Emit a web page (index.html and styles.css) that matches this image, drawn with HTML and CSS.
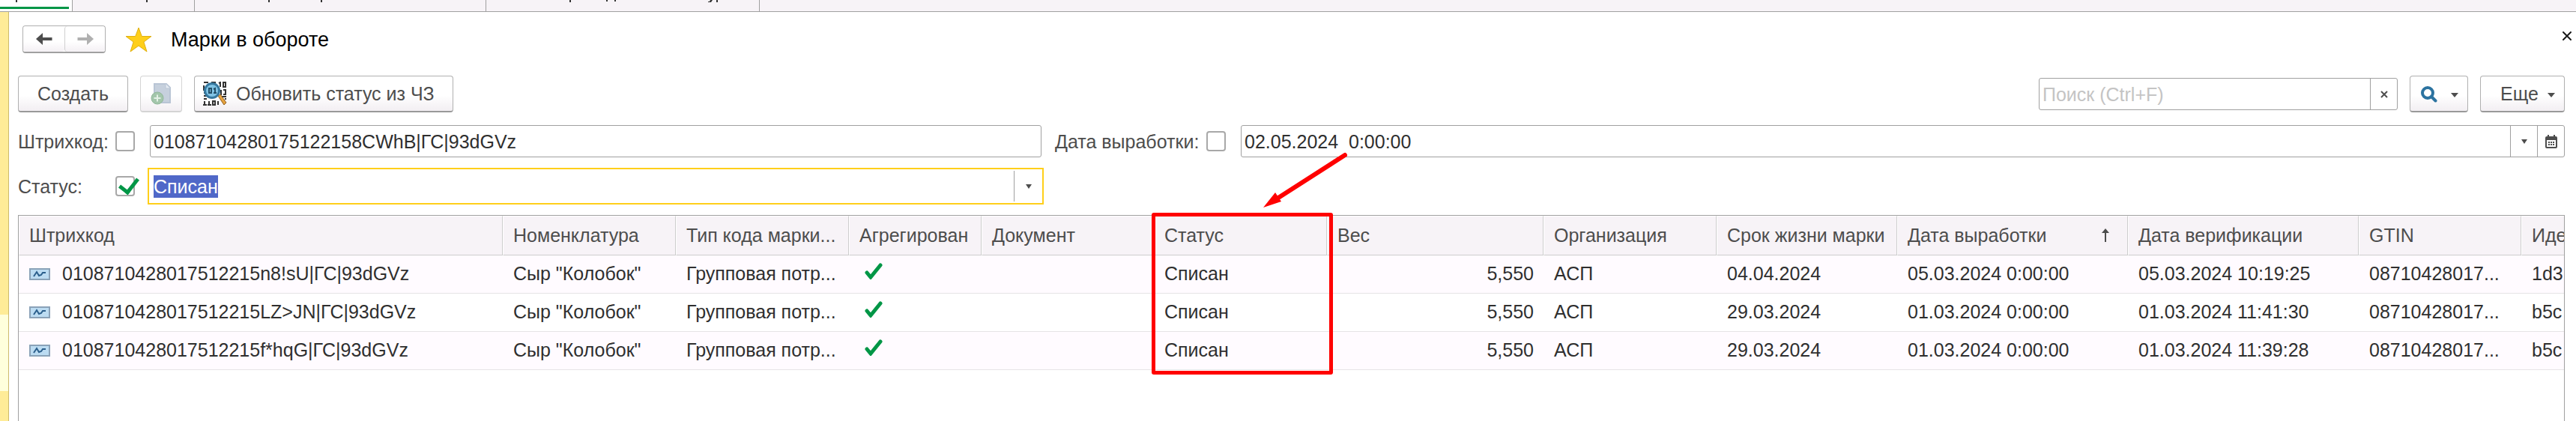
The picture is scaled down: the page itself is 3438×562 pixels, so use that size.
FILE: index.html
```html
<!DOCTYPE html>
<html lang="ru">
<head>
  <meta charset="UTF-8">
  <meta name="viewport" content="width=device-width, initial-scale=1.0">
  <title>Марки в обороте</title>
  <link rel="stylesheet" href="styles.css">
</head>
<body>
  <!-- Bottom edge of the window tabs -->
  <div class="tabs">
    <div class="tab tab-active"><svg width="96" height="4" viewBox="0 0 96 4"><path d="M21 0h2v3h-2z" fill="#333"/></svg></div>
    <div class="tab tab-second"><svg width="160" height="4" viewBox="0 0 160 4"><path d="M98 0h2v3h-2z" fill="#333"/></svg></div>
    <div class="tab tab-third"><svg width="380" height="4" viewBox="0 0 380 4"><path d="M98 0h2v3h-2zM168 0h2v3h-2z" fill="#333"/></svg></div>
    <div class="tab tab-fourth"><svg width="360" height="4" viewBox="0 0 360 4"><path d="M111 0h2v3h-2zM160 0h2v2h-2zM171 0h2v2h-2zM299 0h3l-2 3h-4V2h2zM307 0h2v3h-2z" fill="#333"/></svg></div>
  </div>

  <div class="workspace">
    <div class="sidebar"><div class="sidebar-current"></div></div>

    <main class="form">
      <header class="title-bar">
        <div class="nav">
          <button type="button" class="nav-button" aria-label="Назад">
            <svg width="22" height="16" viewBox="0 0 22 16"><path d="M0 8 9 0v6h12.500v4H9v6z" fill="#4d4d4d"/></svg>
          </button>
          <button type="button" class="nav-button" aria-label="Вперед">
            <svg width="22" height="16" viewBox="0 0 22 16"><path d="M22 8 13 0v6H.5v4H13v6z" fill="#b0b0b0"/></svg>
          </button>
        </div>
        <svg class="star" width="36" height="34" viewBox="0 0 36 34"><path d="M18 1l4.300 11.500H35L24.900 20l4.100 13-11-8-11 8 4.100-13L1 12.500h12.700z" fill="#ffcf1a" stroke="#e0b010"/></svg>
        <h1>Марки в обороте</h1>
        <button type="button" class="close" aria-label="Закрыть">
          <svg width="12" height="12" viewBox="0 0 12 12"><path d="M1 1l10 10M11 1L1 11" stroke="#1a1a1a" stroke-width="2" stroke-linecap="round"/></svg>
        </button>
      </header>

      <div class="toolbar">
        <button type="button" class="button create">Создать</button>
        <button type="button" class="button copy" aria-label="Скопировать" disabled>
          <svg width="28" height="30" viewBox="0 0 28 30">
            <path d="M5 2h16l5 5v20H5z" fill="#c6d0dd" stroke="#b9c5d5" stroke-width="2"/>
            <path d="M20 2v6h6" fill="#e5ebf2" stroke="#b9c5d5"/>
            <circle cx="9" cy="21" r="8" fill="#a3c6ab" stroke="#92b79b"/>
            <path d="M9 16.500v9M4.500 21h9" stroke="#e4f1e6" stroke-width="2"/>
          </svg>
        </button>
        <button type="button" class="button refresh">
          <svg width="32" height="32" viewBox="0 0 32 32">
            <g fill="none" stroke="#333" stroke-width="2">
              <path d="M1 1h6M11 1h6M21 2l2-1v6M27 1h3v6h-3zM1 5v7M1 15h4M1 19h6M1 23h4M22 12h2v6M27 11h3v6h-3M25 20h6M29 23h2"/>
              <path d="M2 26v5M0 31h5M8 26v5M6 31h5M13 26h3v5h-3zM20 26v5"/>
            </g>
            <path d="M20 19l3-2 8 11-3 3z" fill="#e6a33e" stroke="#8f5f25"/>
            <circle cx="12" cy="12" r="9.500" fill="#80c3e4" stroke="#35789f" stroke-width="3"/>
            <path d="M8 9h3v6H8zM14 10l2-1v6M14 15h4" fill="none" stroke="#235069" stroke-width="2"/>
          </svg>
          Обновить статус из ЧЗ
        </button>

        <div class="field search">
          <input type="text" aria-label="Поиск" placeholder="Поиск (Ctrl+F)">
          <button type="button" class="field-button" aria-label="Очистить">
            <svg width="10" height="10" viewBox="0 0 10 10"><path d="M1 1l8 8M9 1L1 9" stroke="#4d4d4d" stroke-width="2"/></svg>
          </button>
        </div>
        <button type="button" class="button find" aria-label="Найти">
          <svg width="23" height="23" viewBox="0 0 23 23"><circle cx="10" cy="10" r="7" fill="none" stroke="#2c73a0" stroke-width="4"/><path d="M15 15l5.500 5.500" stroke="#2c73a0" stroke-width="4" stroke-linecap="round"/></svg>
          <svg class="caret" width="10" height="6" viewBox="0 0 10 6"><path d="M0 0h10L5 6z" fill="#4d4d4d"/></svg>
        </button>
        <button type="button" class="button more">
          Еще
          <svg class="caret" width="10" height="6" viewBox="0 0 10 6"><path d="M0 0h10L5 6z" fill="#4d4d4d"/></svg>
        </button>
      </div>

      <!-- Filters -->
      <div class="filters">
        <div class="filter">
          <label class="filter-label" for="barcode">Штрихкод:</label>
          <input type="checkbox" class="check" aria-label="Отбор по штрихкоду">
          <div class="field">
            <input type="text" id="barcode" value="01087104280175122158CWhB|ГС|93dGVz">
          </div>
        </div>
        <div class="filter">
          <label class="filter-label-date" for="date">Дата выработки:</label>
          <input type="checkbox" class="check" aria-label="Отбор по дате выработки">
          <div class="field">
            <input type="text" id="date" value="02.05.2024  0:00:00">
            <button type="button" class="field-button" aria-label="Выбрать">
              <svg width="8" height="6" viewBox="0 0 8 6"><path d="M0 0h8L4 6z" fill="#4d4d4d"/></svg>
            </button>
            <button type="button" class="field-button" aria-label="Календарь">
              <svg width="16" height="18" viewBox="0 0 16 18">
                <path d="M2 2h1V0h2v2h6V0h2v2h1q2 0 2 2v12q0 2-2 2H2q-2 0-2-2V4q0-2 2-2z" fill="#4d4d4d"/>
                <path d="M2 7h12v9H2z" fill="#fff"/>
                <path d="M4 10h8M4 13h8" stroke="#4d4d4d" stroke-width="2" stroke-dasharray="2 1"/>
              </svg>
            </button>
          </div>
        </div>
        <div class="filter">
          <label class="filter-label" for="status">Статус:</label>
          <input type="checkbox" class="check" aria-label="Отбор по статусу" checked>
          <div class="field field-focus">
            <input type="text" id="status" value="Списан" autofocus>
            <button type="button" class="field-button" aria-label="Выбрать">
              <svg width="8" height="6" viewBox="0 0 8 6"><path d="M0 0h8L4 6z" fill="#4d4d4d"/></svg>
            </button>
          </div>
        </div>
      </div>

      <!-- Marks list -->
      <div class="list">
        <table>
          <colgroup>
            <col class="col-barcode"><col class="col-item"><col class="col-type"><col class="col-aggregated">
            <col class="col-document"><col class="col-status"><col class="col-weight"><col class="col-company">
            <col class="col-lifetime"><col class="col-made"><col class="col-verified"><col class="col-gtin"><col>
          </colgroup>
          <thead>
            <tr>
              <th>Штрихкод</th>
              <th>Номенклатура</th>
              <th>Тип кода марки...</th>
              <th>Агрегирован</th>
              <th>Документ</th>
              <th>Статус</th>
              <th>Вес</th>
              <th>Организация</th>
              <th>Срок жизни марки</th>
              <th>
                <div class="sorted">
                  Дата выработки
                  <svg width="10" height="18" viewBox="0 0 10 18"><path d="M5 0l5 6H6v12H4V6H0z" fill="#4d4d4d"/></svg>
                </div>
              </th>
              <th>Дата верификации</th>
              <th>GTIN</th>
              <th>Иде</th>
            </tr>
          </thead>
          <tbody>
            <tr>
              <td><svg class="mark" width="28" height="16" viewBox="0 0 28 16"><path d="M1 1h26v14H1z" fill="#bcdcf2" stroke="#8aa2b8" stroke-width="2"/><path d="M6 11l4-6 3 5 3-1 2-3h4" fill="none" stroke="#2b5f8c" stroke-width="2"/></svg>0108710428017512215n8!sU|ГС|93dGVz</td>
              <td>Сыр "Колобок"</td>
              <td>Групповая потр...</td>
              <td><svg class="tick" width="24" height="22" viewBox="0 0 24 22"><path d="M3 13l5 6L21 3" fill="none" stroke="#009646" stroke-width="5" stroke-linecap="round"/></svg></td>
              <td></td>
              <td>Списан</td>
              <td class="number">5,550</td>
              <td>АСП</td>
              <td>04.04.2024</td>
              <td>05.03.2024 0:00:00</td>
              <td>05.03.2024 10:19:25</td>
              <td>08710428017...</td>
              <td>1d3</td>
            </tr>
            <tr>
              <td><svg class="mark" width="28" height="16" viewBox="0 0 28 16"><path d="M1 1h26v14H1z" fill="#bcdcf2" stroke="#8aa2b8" stroke-width="2"/><path d="M6 11l4-6 3 5 3-1 2-3h4" fill="none" stroke="#2b5f8c" stroke-width="2"/></svg>0108710428017512215LZ&gt;JN|ГС|93dGVz</td>
              <td>Сыр "Колобок"</td>
              <td>Групповая потр...</td>
              <td><svg class="tick" width="24" height="22" viewBox="0 0 24 22"><path d="M3 13l5 6L21 3" fill="none" stroke="#009646" stroke-width="5" stroke-linecap="round"/></svg></td>
              <td></td>
              <td>Списан</td>
              <td class="number">5,550</td>
              <td>АСП</td>
              <td>29.03.2024</td>
              <td>01.03.2024 0:00:00</td>
              <td>01.03.2024 11:41:30</td>
              <td>08710428017...</td>
              <td>b5c</td>
            </tr>
            <tr>
              <td><svg class="mark" width="28" height="16" viewBox="0 0 28 16"><path d="M1 1h26v14H1z" fill="#bcdcf2" stroke="#8aa2b8" stroke-width="2"/><path d="M6 11l4-6 3 5 3-1 2-3h4" fill="none" stroke="#2b5f8c" stroke-width="2"/></svg>0108710428017512215f*hqG|ГС|93dGVz</td>
              <td>Сыр "Колобок"</td>
              <td>Групповая потр...</td>
              <td><svg class="tick" width="24" height="22" viewBox="0 0 24 22"><path d="M3 13l5 6L21 3" fill="none" stroke="#009646" stroke-width="5" stroke-linecap="round"/></svg></td>
              <td></td>
              <td>Списан</td>
              <td class="number">5,550</td>
              <td>АСП</td>
              <td>29.03.2024</td>
              <td>01.03.2024 0:00:00</td>
              <td>01.03.2024 11:39:28</td>
              <td>08710428017...</td>
              <td>b5c</td>
            </tr>
          </tbody>
        </table>

        <!-- Callout over the status column -->
        <div class="callout"></div>
        <svg class="callout-arrow" width="114" height="76" viewBox="0 0 114 76"><path d="M110 4L18 63" stroke="#f00" stroke-width="6" stroke-linecap="round"/><path d="M1 74L17 54l8 12z" fill="#f00"/></svg>
      </div>
    </main>
  </div>

  <script>
    // Put the cursor in the status field with its text selected
    document.getElementById('status').select();
  </script>
</body>
</html>
```
FILE: styles.css
```css
* {
  box-sizing: border-box;
}

body {
  margin: 0;
  height: 100vh;
  display: flex;
  flex-direction: column;
  overflow: hidden;
  background-color: #fff;
  color: #4d4d4d;
  font-family: "Liberation Sans", Arial, sans-serif;
  font-size: 25px;
  line-height: 30px;
}

button, input {
  font: inherit;
  color: inherit;
}

svg {
  flex: none;
}

.tabs {
  flex: none;
  display: flex;
  height: 16px;
  background-color: #f7f3f7;
  border-bottom: 1px solid #a0a0a0;
}

.tab {
  border-right: 1px solid #a0a0a0;
}

.tab svg {
  display: block;
}

.tab-active {
  width: 97px;
  padding-right: 4px;
  background-color: #fff;
}

.tab-active::after {
  content: "";
  display: block;
  height: 3px;
  margin-top: 5px;
  background-color: #009646;
}

.tab-second {
  width: 163px;
}

.tab-third {
  width: 389px;
}

.tab-fourth {
  width: 365px;
}

.workspace {
  flex: 1;
  display: flex;
  min-height: 0;
}

.sidebar {
  flex: none;
  width: 12px;
  padding-top: 404px;
  background-color: #ffec98;
  border-right: 1px solid #cdbb6c;
}

.sidebar-current {
  height: 102px;
  background-color: #ffffdc;
}

.form {
  flex: 1;
  min-width: 0;
  display: flex;
  flex-direction: column;
  padding: 18px 15px 0 12px;
}

.title-bar {
  display: flex;
  align-items: center;
  height: 37px;
  padding-left: 6px;
}

.nav {
  display: flex;
  height: 37px;
  border: 1px solid #b0b0b0;
  border-bottom: 2px solid #a0a0a0;
  border-radius: 4px;
}

.nav-button {
  display: flex;
  align-items: center;
  justify-content: center;
  width: 55px;
  padding: 0;
  border: none;
  border-radius: 4px;
  background: linear-gradient(#fff 60%, #f4f0f4);
}

.nav-button + .nav-button {
  width: 54px;
  border-left: 1px solid #d0d0d0;
}

.star {
  margin-left: 26px;
}

h1 {
  margin: 0 auto 0 25px;
  color: #000;
  font-size: 27px;
  font-weight: normal;
}

.close {
  display: flex;
  margin-right: -9px;
  padding: 0 0 9px;
  border: none;
  background: none;
}

.toolbar {
  display: flex;
  align-items: center;
  gap: 16px;
  margin-top: 30px;
}

.button {
  display: flex;
  align-items: center;
  justify-content: center;
  height: 49px;
  padding: 0;
  border: 1px solid #b0b0b0;
  border-bottom: 2px solid #999;
  border-radius: 4px;
  background: linear-gradient(#fff 55%, #f2eef2);
}

.create {
  width: 147px;
}

.copy {
  width: 56px;
  border-color: #d4d4d4;
}

.refresh {
  width: 346px;
  gap: 12px;
  justify-content: flex-start;
  padding-left: 11px;
}

.find {
  width: 78px;
  gap: 18px;
}

.more {
  width: 113px;
  gap: 12px;
  padding-left: 14px;
}

.caret {
  margin-top: 4px;
}

.field {
  flex: 1;
  display: flex;
  min-width: 0;
  height: 43px;
  border: 1px solid #a0a0a0;
  border-radius: 3px;
  background-color: #fff;
  color: #2f2f2f;
}

.field input {
  flex: 1;
  min-width: 0;
  padding: 0 4px;
  border: none;
  outline: none;
  background: none;
}

.field input::placeholder {
  color: #c4c4c4;
}

.field input::selection {
  background-color: #5068c8;
  color: #fff;
}

.field-button {
  display: flex;
  align-items: center;
  justify-content: center;
  width: 36px;
  padding: 0;
  border: none;
  border-left: 1px solid #a0a0a0;
  background: none;
}

.search {
  flex: none;
  width: 479px;
  margin-left: auto;
}

.filters {
  display: grid;
  grid-template-columns: 1366fr 2015fr;
  gap: 17px 18px;
  margin-top: 17px;
}

.filter {
  display: flex;
  align-items: center;
  height: 43px;
}

.filter-label {
  width: 130px;
}

.filter-label-date {
  width: 202px;
}

.check {
  appearance: none;
  width: 26px;
  height: 27px;
  margin: 0 20px 0 0;
  border: 2px solid #a8a8a8;
  border-radius: 4px;
  background-color: #fff;
}

.check:checked {
  position: relative;
}

.check:checked::after {
  content: "";
  position: absolute;
  left: 8px;
  top: -4px;
  width: 11px;
  height: 20px;
  border: solid #009646;
  border-width: 0 5px 5px 0;
  transform: rotate(38deg);
}

.field-focus {
  height: 49px;
  margin: 0 -3px;
  padding: 2px 0 2px 2px;
  border: 2px solid #ffcf1a;
  border-radius: 0;
}

.field-focus .field-button {
  width: 38px;
}

.list {
  flex: 1;
  position: relative;
  min-height: 0;
  margin-top: 17px;
  border: 1px solid #a0a0a0;
  border-bottom: none;
}

table {
  width: 100%;
  table-layout: fixed;
  border-collapse: separate;
  border-spacing: 0;
}

th, td {
  padding: 0 13px 2px;
  overflow: hidden;
  text-align: left;
  font-weight: normal;
  white-space: nowrap;
}

th {
  height: 53px;
  border: 1px solid #fff;
  border-right-color: #cdcdcd;
  border-bottom-color: #cdcdcd;
  background-color: #f7f3f7;
}

td {
  height: 51px;
  padding-left: 14px;
  border-bottom: 1px solid #e6e4e6;
  color: #2f2f2f;
}

th:last-child, td:last-child {
  padding-right: 0;
  border-right: none;
  text-overflow: clip;
}

tbody tr:nth-child(odd) {
  background-color: #fffbff;
}

.number {
  text-align: right;
}

.sorted {
  display: flex;
  align-items: center;
  justify-content: space-between;
  padding-right: 11px;
}

.mark {
  margin-right: 16px;
}

.tick {
  display: block;
  margin: 0 0 6px 7px;
}

.col-barcode {
  width: 646px;
}

.col-item, .col-type, .col-status {
  width: 231px;
}

.col-aggregated {
  width: 177px;
}

.col-document {
  width: 230px;
}

.col-weight {
  width: 289px;
}

.col-company {
  width: 231px;
}

.col-lifetime {
  width: 241px;
}

.col-made, .col-verified {
  width: 308px;
}

.col-gtin {
  width: 217px;
}

.callout {
  position: absolute;
  left: 1512px;
  top: -4px;
  width: 242px;
  height: 216px;
  border: 5px solid #f00;
  border-radius: 3px;
}

.callout-arrow {
  position: absolute;
  left: 1660px;
  top: -85px;
}
```
